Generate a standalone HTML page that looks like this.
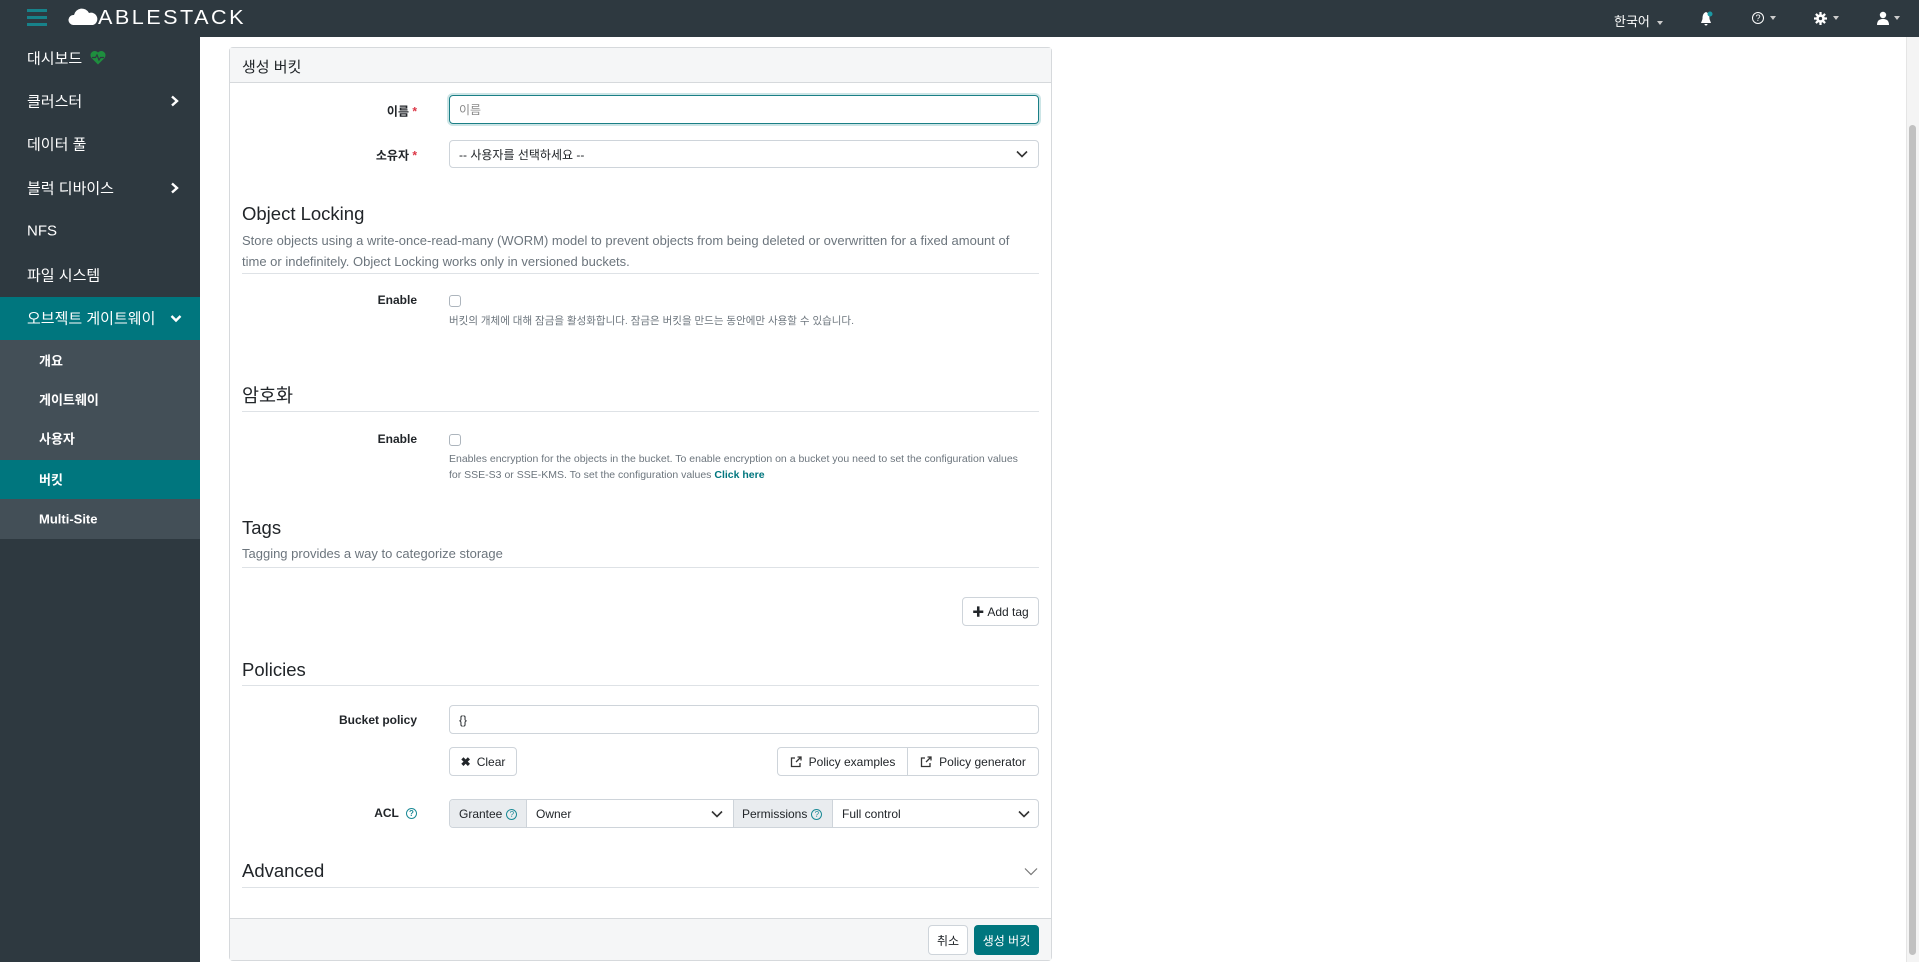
<!DOCTYPE html>
<html><head><meta charset="utf-8"><style>
*{box-sizing:border-box;margin:0;padding:0}
body{width:1919px;height:962px;overflow:hidden;background:#fff;font-family:"Liberation Sans","Noto Sans CJK KR",sans-serif;color:#212529;position:relative}
.a{position:absolute}
#top{left:0;top:0;width:1919px;height:37px;background:#2e3940}
#side{left:0;top:37px;width:200px;height:925px;background:#2e3940}
.si{position:absolute;left:27px;color:#fff;font-size:15px;transform:translateY(-50%)}
.sub{position:absolute;left:39px;color:#fff;font-size:13px;font-weight:bold;transform:translateY(-50%)}
.chev{position:absolute;left:170px}
.card{left:229px;top:47px;width:823px;height:914px;border:1px solid #d6d9dc;border-radius:4px}
.lbl{position:absolute;right:calc(1919px - 417px);font-size:12px;font-weight:bold;transform:translateY(-50%);white-space:nowrap}
.req{color:#dc3545}
.inp{position:absolute;left:449px;width:590px;border:1px solid #ced4da;border-radius:4px;font-size:12px;padding-left:9px;display:flex;align-items:center}
h3{position:absolute;left:242px;font-weight:normal;font-size:18.5px;transform:translateY(-50%);color:#212529}
.p{position:absolute;left:242px;font-size:13px;color:#6c757d;line-height:21px}
.hr{position:absolute;left:242px;width:797px;height:1px;background:#dee2e6}
.cb{position:absolute;left:449px;width:12px;height:12px;border:1px solid #adb5bd;border-radius:3px}
.d{position:absolute;left:449px;font-size:10.5px;color:#6c757d;line-height:16px}
.btn{position:absolute;border:1px solid #ced4da;border-radius:4px;font-size:12px;display:flex;align-items:center;justify-content:center;background:#fff;color:#212529}
.caret{display:inline-block;width:0;height:0;border-left:3px solid transparent;border-right:3px solid transparent;border-top:4px solid #ccc;margin-left:7px;vertical-align:middle}
.q{display:inline-block;width:11px;height:11px;border:1px solid #1b8a96;border-radius:50%;color:#1b8a96;font-size:8px;line-height:9px;text-align:center;margin-left:4px;vertical-align:middle}
.sel{position:absolute;right:10px;top:50%;margin-top:-4px}
</style></head><body>
<div id="top" class="a">
 <div class="a" style="left:27px;top:9px;width:20px;height:3px;background:#17828a"></div>
 <div class="a" style="left:27px;top:16px;width:20px;height:3px;background:#17828a"></div>
 <div class="a" style="left:27px;top:23px;width:20px;height:3px;background:#17828a"></div>
 <svg class="a" style="left:68px;top:8px" width="30" height="18" viewBox="0 0 30 18"><path d="M5 17 A5 5 0 0 1 6 7 A8 8 0 0 1 21 5 A6 6 0 0 1 25 17 Z" fill="#fff"/></svg>
 <div class="a" style="left:98px;top:7px;color:#fff;font-size:20px;letter-spacing:2.3px;transform:scaleX(1.08);transform-origin:left">ABLESTACK</div>
 <div class="a" style="left:1614px;top:11px;color:#fff;font-size:13px">한국어<span class="caret"></span></div>
 <svg class="a" style="left:1699px;top:11px" width="16" height="16" viewBox="0 0 16 16"><path d="M7 1 C4 2 3.5 5 3.5 8 L2 12 H12 L10.5 8 C10.5 5 10 2 7 1Z M5.5 13 a1.5 1.5 0 0 0 3 0Z" fill="#fff"/><circle cx="11" cy="3" r="2.5" fill="#1b9aa4"/></svg>
 <div class="a" style="left:1752px;top:12px;width:12px;height:12px;border:1.3px solid #fff;border-radius:50%;color:#fff;font-size:9px;line-height:10px;text-align:center">?</div>
 <div class="a" style="left:1763px;top:9px"><span class="caret"></span></div>
 <svg class="a" style="left:1814px;top:12px" width="13" height="13" viewBox="0 0 14 14"><g fill="#fff"><circle cx="7" cy="7" r="4.6"/><rect x="5.8" y="0" width="2.4" height="14"/><rect x="0" y="5.8" width="14" height="2.4"/><rect x="5.8" y="0" width="2.4" height="14" transform="rotate(45 7 7)"/><rect x="5.8" y="0" width="2.4" height="14" transform="rotate(-45 7 7)"/></g><circle cx="7" cy="7" r="1.8" fill="#2e3940"/></svg>
 <div class="a" style="left:1826px;top:9px"><span class="caret"></span></div>
 <svg class="a" style="left:1877px;top:11px" width="12" height="14" viewBox="0 0 12 14"><circle cx="6" cy="4" r="3.2" fill="#fff"/><path d="M0 14 C0 9 3 8 6 8 C9 8 12 9 12 14Z" fill="#fff"/></svg>
 <div class="a" style="left:1887px;top:9px"><span class="caret"></span></div>
</div>
<div id="side" class="a">
 <div class="si" style="top:21px">대시보드 <svg width="16" height="14" viewBox="0 0 16 14" style="vertical-align:-1px;margin-left:4px"><path d="M8 14 L1.5 7.5 A3.8 3.8 0 0 1 8 2 A3.8 3.8 0 0 1 14.5 7.5Z" fill="#1e8e3e"/><path d="M2 7 H5.5 L7 4.5 L9 9.5 L10.5 7 H14" stroke="#2e3940" stroke-width="1.2" fill="none"/></svg></div>
 <div class="si" style="top:64px">클러스터</div><svg class="chev" style="top:58px" width="9" height="12" viewBox="0 0 9 12"><path d="M2 1.5 L7 6 L2 10.5" stroke="#fff" stroke-width="2.4" fill="none"/></svg>
 <div class="si" style="top:107px">데이터 풀</div>
 <div class="si" style="top:151px">블럭 디바이스</div><svg class="chev" style="top:145px" width="9" height="12" viewBox="0 0 9 12"><path d="M2 1.5 L7 6 L2 10.5" stroke="#fff" stroke-width="2.4" fill="none"/></svg>
 <div class="si" style="top:194px">NFS</div>
 <div class="si" style="top:238px">파일 시스템</div>
 <div class="a" style="left:0;top:260px;width:200px;height:43px;background:#00767e"></div>
 <div class="si" style="top:281px">오브젝트 게이트웨이</div><svg class="a" style="left:170px;top:277px" width="12" height="9" viewBox="0 0 12 9"><path d="M1.5 2 L6 6.5 L10.5 2" stroke="#fff" stroke-width="2.4" fill="none"/></svg>
 <div class="a" style="left:0;top:303px;width:200px;height:199px;background:#434f57"></div>
 <div class="sub" style="top:323px">개요</div>
 <div class="sub" style="top:362px">게이트웨이</div>
 <div class="sub" style="top:401px">사용자</div>
 <div class="a" style="left:0;top:423px;width:200px;height:39px;background:#00767e"></div>
 <div class="sub" style="top:442px">버킷</div>
 <div class="sub" style="top:482px">Multi-Site</div>
</div>
<div class="a" style="left:1906px;top:37px;width:13px;height:925px;background:#f4f4f4;border-left:1px solid #e5e5e5"></div>
<div class="a" style="left:1909px;top:125px;width:7px;height:830px;background:#c1c1c1;border-radius:4px"></div>

<div class="a card"></div>
<div class="a" style="left:230px;top:48px;width:821px;height:35px;background:#f5f6f7;border-bottom:1px solid #d6d9dc"></div>
<div class="a" style="left:242px;top:56px;font-size:15px">생성 버킷</div>

<div class="lbl" style="top:111px">이름 <span class="req">*</span></div>
<div class="inp" style="top:95px;height:29px;border:1.5px solid #1b7f86;box-shadow:0 0 0 2px rgba(0,123,131,.2);color:#888">이름</div>
<div class="lbl" style="top:155px">소유자 <span class="req">*</span></div>
<div class="inp" style="top:140px;height:28px">-- 사용자를 선택하세요 --<svg class="sel" width="12" height="8" viewBox="0 0 12 8"><path d="M1 1.5 L6 6.5 L11 1.5" stroke="#333" stroke-width="1.6" fill="none"/></svg></div>

<h3 style="top:214px">Object Locking</h3>
<div class="p" style="top:230px">Store objects using a write-once-read-many (WORM) model to prevent objects from being deleted or overwritten for a fixed amount of<br>time or indefinitely. Object Locking works only in versioned buckets.</div>
<div class="hr" style="top:273px"></div>
<div class="lbl" style="top:300px">Enable</div>
<div class="cb" style="top:295px"></div>
<div class="d" style="top:313px">버킷의 개체에 대해 잠금을 활성화합니다. 잠금은 버킷을 만드는 동안에만 사용할 수 있습니다.</div>

<h3 style="top:395px">암호화</h3>
<div class="hr" style="top:411px"></div>
<div class="lbl" style="top:439px">Enable</div>
<div class="cb" style="top:434px"></div>
<div class="d" style="top:451px">Enables encryption for the objects in the bucket. To enable encryption on a bucket you need to set the configuration values<br>for SSE-S3 or SSE-KMS. To set the configuration values <span style="color:#00767e;font-weight:bold">Click here</span></div>

<h3 style="top:528px">Tags</h3>
<div class="p" style="top:543px">Tagging provides a way to categorize storage</div>
<div class="hr" style="top:567px"></div>
<div class="btn" style="left:962px;top:597px;width:77px;height:29px"><b style="margin-right:3px">✚</b>Add tag</div>

<h3 style="top:670px">Policies</h3>
<div class="hr" style="top:685px"></div>
<div class="lbl" style="top:720px">Bucket policy</div>
<div class="inp" style="top:705px;height:29px">{}</div>
<div class="btn" style="left:449px;top:747px;width:68px;height:29px"><b style="margin-right:6px">✖</b>Clear</div>
<div class="btn" style="left:777px;top:747px;width:131px;height:29px;border-radius:4px 0 0 4px"><svg width="12" height="12" viewBox="0 0 12 12" style="margin-right:7px"><path d="M5 2 H1.5 V10.5 H10 V7 M6 6 L11 1 M7.5 1 H11 V4.5" stroke="#333" stroke-width="1.3" fill="none"/></svg>Policy examples</div>
<div class="btn" style="left:907px;top:747px;width:132px;height:29px;border-radius:0 4px 4px 0"><svg width="12" height="12" viewBox="0 0 12 12" style="margin-right:7px"><path d="M5 2 H1.5 V10.5 H10 V7 M6 6 L11 1 M7.5 1 H11 V4.5" stroke="#333" stroke-width="1.3" fill="none"/></svg>Policy generator</div>

<div class="lbl" style="top:813px">ACL <span class="q">?</span></div>
<div class="a" style="left:449px;top:799px;width:590px;height:29px;border:1px solid #ced4da;border-radius:4px;overflow:hidden;font-size:12px">
 <div class="a" style="left:0;top:0;width:77px;height:27px;background:#e9ecef;border-right:1px solid #ced4da;padding:7px 0 0 9px">Grantee<span class="q">?</span></div>
 <div class="a" style="left:77px;top:0;width:206px;height:27px;padding:7px 0 0 9px">Owner<svg class="sel" width="12" height="8" viewBox="0 0 12 8"><path d="M1 1.5 L6 6.5 L11 1.5" stroke="#333" stroke-width="1.6" fill="none"/></svg></div>
 <div class="a" style="left:283px;top:0;width:100px;height:27px;background:#e9ecef;border-left:1px solid #ced4da;border-right:1px solid #ced4da;padding:7px 0 0 8px">Permissions<span class="q">?</span></div>
 <div class="a" style="left:383px;top:0;width:207px;height:27px;padding:7px 0 0 9px">Full control<svg class="sel" width="12" height="8" viewBox="0 0 12 8"><path d="M1 1.5 L6 6.5 L11 1.5" stroke="#333" stroke-width="1.6" fill="none"/></svg></div>
</div>

<h3 style="top:871px">Advanced</h3>
<svg class="a" style="left:1024px;top:867px" width="14" height="9" viewBox="0 0 14 9"><path d="M1 1.5 L7 7.5 L13 1.5" stroke="#777" stroke-width="1.2" fill="none"/></svg>
<div class="hr" style="top:887px"></div>

<div class="a" style="left:230px;top:918px;width:821px;height:42px;background:#f5f6f7;border-top:1px solid #d6d9dc"></div>
<div class="btn" style="left:928px;top:925px;width:40px;height:30px">취소</div>
<div class="btn" style="left:974px;top:925px;width:65px;height:30px;background:#00767e;border-color:#00767e;color:#fff">생성 버킷</div>
</body></html>
